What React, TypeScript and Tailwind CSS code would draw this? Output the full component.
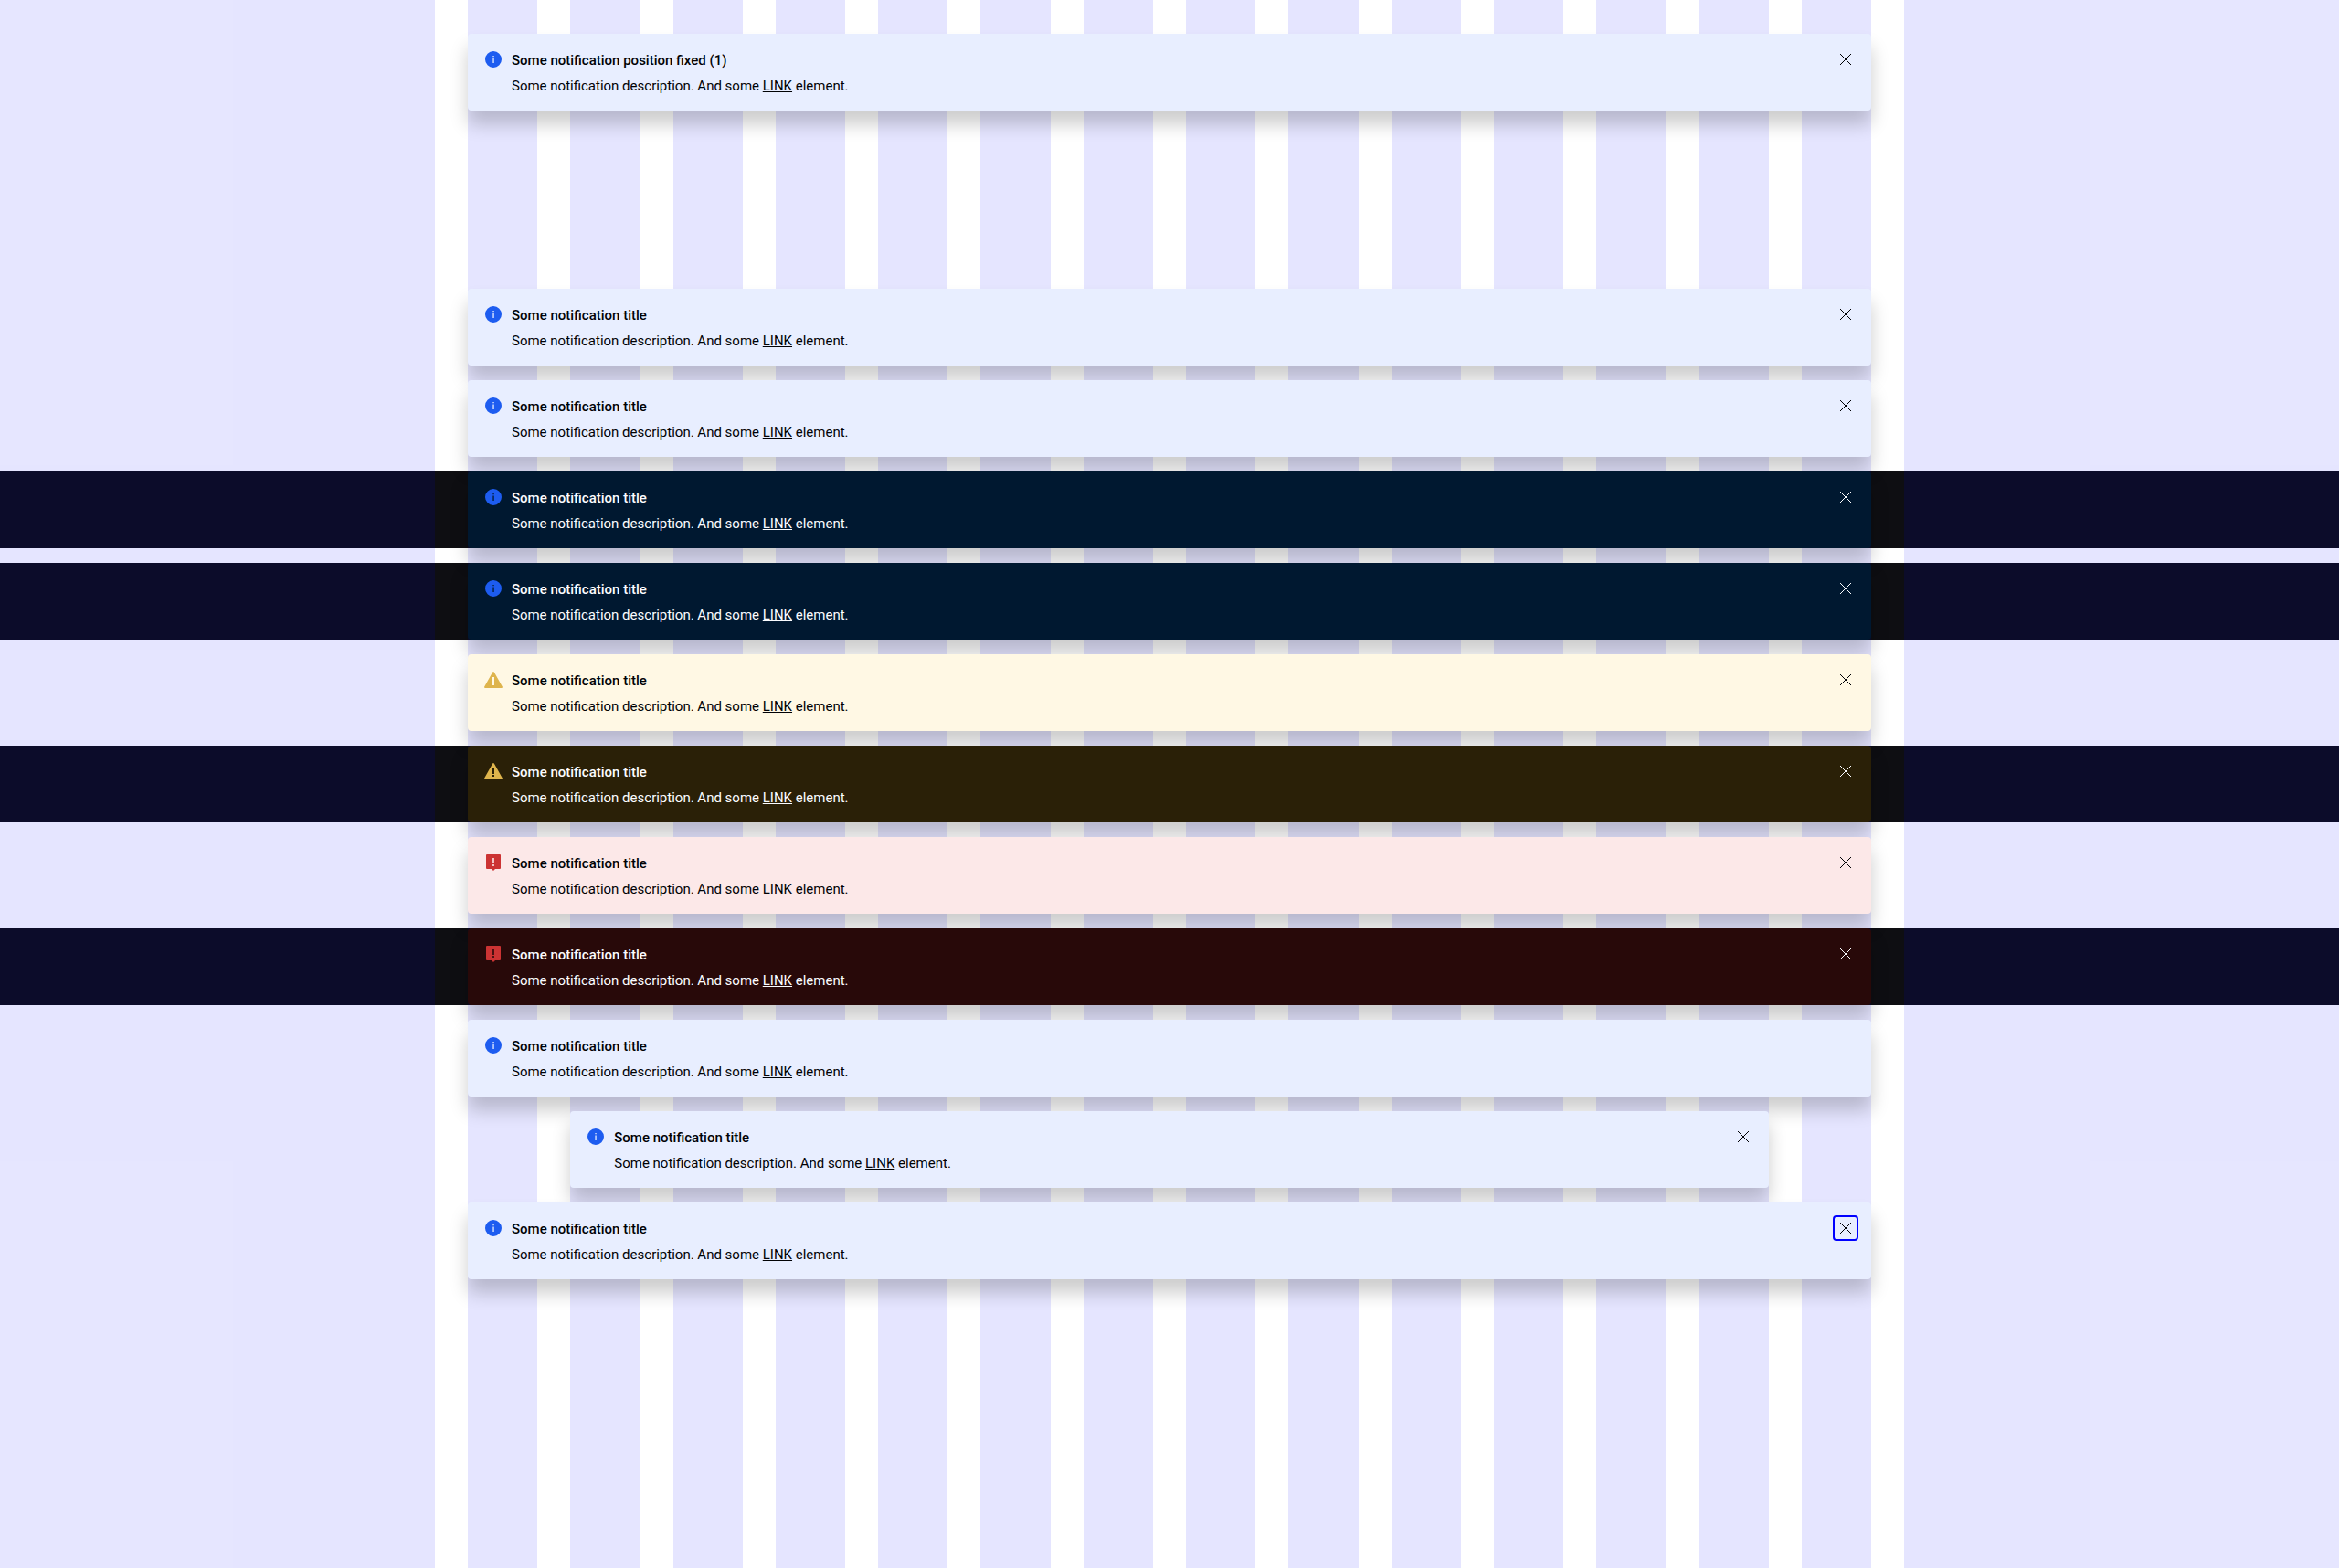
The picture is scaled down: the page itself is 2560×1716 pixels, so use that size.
type Kind = 'info' | 'warning' | 'error';

interface Item {
  id: string;
  kind: Kind;
  dark?: boolean;
  closable?: boolean;
  narrow?: boolean;
  focused?: boolean;
  title?: string;
}

const items: Item[] = [
  { id: 'info-a', kind: 'info' },
  { id: 'info-b', kind: 'info' },
  { id: 'info-dark-a', kind: 'info', dark: true },
  { id: 'info-dark-b', kind: 'info', dark: true },
  { id: 'warning', kind: 'warning' },
  { id: 'warning-dark', kind: 'warning', dark: true },
  { id: 'error', kind: 'error' },
  { id: 'error-dark', kind: 'error', dark: true },
  { id: 'persistent', kind: 'info', closable: false },
  { id: 'narrow', kind: 'info', narrow: true },
  { id: 'focused', kind: 'info', focused: true },
];

const lightSurface: Record<Kind, string> = {
  info: 'bg-[#e8eeff]',
  warning: 'bg-[#fff8e4]',
  error: 'bg-[#fce8e8]',
};

const darkSurface: Record<Kind, string> = {
  info: 'bg-[#001830]',
  warning: 'bg-[#2a2007]',
  error: 'bg-[#280909]',
};

const iconColor: Record<Kind, string> = {
  info: 'text-[#1d5cf0]',
  warning: 'text-[#deb44c]',
  error: 'text-[#cc3333]',
};

function StatusIcon({ kind }: { kind: Kind }) {
  return (
    <svg
      viewBox="0 0 24 24"
      className={`size-6 shrink-0 ${iconColor[kind]}`}
      fill="currentColor"
      fillRule="evenodd"
      aria-hidden="true"
    >
      {kind === 'info' && (
        <path d="M12 3a9 9 0 1 0 0 18 9 9 0 0 0 0-18Zm-.6 5h1.300v1.200h-1.300V8Zm0 2.400h1.300V16h-1.300v-5.600Z" />
      )}
      {kind === 'warning' && (
        <path d="M11.200 3.400 2.200 19.600c-.4.700 0 1.400.8 1.400h18c.8 0 1.200-.7.800-1.400L12.800 3.400a.9.9 0 0 0-1.600 0ZM11 9h2v6h-2V9Zm0 7h2v2h-2v-2Z" />
      )}
      {kind === 'error' && (
        <path d="M5 3h14a1 1 0 0 1 1 1v14a1 1 0 0 1-1 1h-5l-2 2-2-2H5a1 1 0 0 1-1-1V4a1 1 0 0 1 1-1Zm6.200 4v6h1.600V7h-1.600Zm0 7v2h1.600v-2h-1.600Z" />
      )}
    </svg>
  );
}

function Notification({ item }: { item: Item }) {
  const { kind, dark, closable = true, focused, title = 'Some notification title' } = item;
  const surface = dark ? `${darkSurface[kind]} text-[#fbfcff]` : `${lightSurface[kind]} text-[#010205]`;
  return (
    <div
      role="status"
      className={`relative flex items-start gap-2 rounded px-4 pt-4 pb-3.5 shadow-[0_15px_20px_rgba(0,0,0,0.2)] ${surface}`}
    >
      <StatusIcon kind={kind} />
      <div className="flex grow flex-col gap-0.5">
        <h5 className="font-medium">{title}</h5>
        <p>
          Some notification description. And some{' '}
          <a href="#link" className="underline underline-offset-1">
            LINK
          </a>{' '}
          element.
        </p>
      </div>
      {closable && (
        <button
          type="button"
          aria-label="Close notification"
          className={`size-6 shrink-0 rounded-xs ${focused ? 'outline-2 outline-[#0000ff]' : ''}`}
        >
          <svg viewBox="0 0 24 24" className="size-6" fill="none" stroke="currentColor" aria-hidden="true">
            <path d="M6 6l12 12M18 6L6 18" />
          </svg>
        </button>
      )}
    </div>
  );
}

function GridOverlay() {
  return (
    <div aria-hidden="true" className="pointer-events-none absolute inset-0 flex">
      <div className="grow bg-[#0000ff]/10" />
      <div className="mx-9 grid w-3/5 grid-cols-14 gap-9">
        {Array.from({ length: 14 }, (_, i) => (
          <div key={i} className="bg-[#0000ff]/10" />
        ))}
      </div>
      <div className="grow bg-[#0000ff]/10" />
    </div>
  );
}

export default function App() {
  return (
    <main className="relative min-h-screen bg-white font-['Roboto',sans-serif] text-[15px] leading-[26px]">
      <GridOverlay />
      <div className="mx-auto w-3/5 pt-[37px] pb-[195px]">
        <Notification item={{ id: 'fixed', kind: 'info', title: 'Some notification position fixed (1)' }} />
      </div>
      <div className="flex flex-col gap-4">
        {items.map((item) => (
          <section key={item.id} className={item.dark ? 'bg-[#0e0e12]' : ''}>
            <div className="mx-auto grid w-3/5 grid-cols-14 gap-x-9">
              <div className={item.narrow ? 'col-span-12 col-start-2' : 'col-span-14'}>
                <Notification item={item} />
              </div>
            </div>
          </section>
        ))}
      </div>
    </main>
  );
}
